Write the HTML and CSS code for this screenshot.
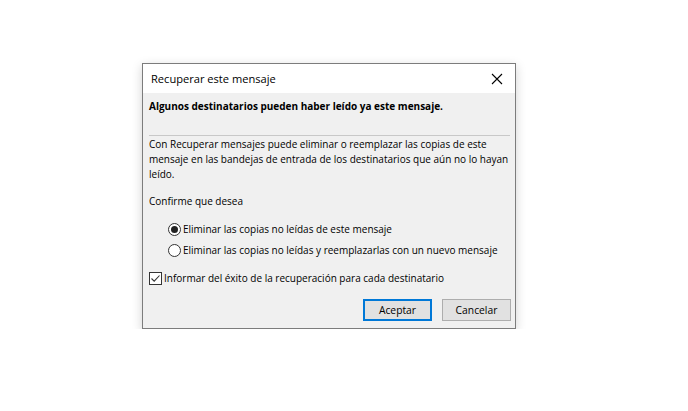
FILE: index.html
```html
<!DOCTYPE html>
<html lang="es">
<head>
    <meta charset="UTF-8">
    <meta name="viewport" content="width=device-width, initial-scale=1.0">
    <title>Recuperar este mensaje</title>
    <link rel="stylesheet" href="styles.css">
</head>
<body>
    <div class="dialog">
        <div class="titlebar">
            <span class="title">Recuperar este mensaje</span>
            <svg class="close" width="12" height="12" viewBox="0 0 12 12">
                <path d="M1 1 L11 11 M11 1 L1 11" stroke="#000" stroke-width="1.1" fill="none"/>
            </svg>
        </div>
        <div class="content">
            <p class="warning">Algunos destinatarios pueden haber leído ya este mensaje.</p>
            <hr class="sep">
            <p class="info">Con Recuperar mensajes puede eliminar o reemplazar las copias de este mensaje en las bandejas de entrada de los destinatarios que aún no lo hayan leído.</p>
            <p class="confirm">Confirme que desea</p>
            <div class="options">
                <label class="option"><span class="radio checked"></span>Eliminar las copias no leídas de este mensaje</label>
                <label class="option"><span class="radio"></span>Eliminar las copias no leídas y reemplazarlas con un nuevo mensaje</label>
            </div>
            <label class="check-row">
                <span class="checkbox">
                    <svg width="11" height="11" viewBox="0 0 11 11">
                        <path d="M1.5 5.5 L4.2 8.2 L9.5 2.5" stroke="#333" stroke-width="1.1" fill="none"/>
                    </svg>
                </span>Informar del éxito de la recuperación para cada destinatario
            </label>
            <div class="buttons">
                <button class="btn default">Aceptar</button>
                <button class="btn">Cancelar</button>
            </div>
        </div>
    </div>
</body>
</html>
```

FILE: styles.css
```css
body {
    margin: 0;
    background: #ffffff;
    font-family: "Open Sans", "Noto Sans", sans-serif;
    color: #000;
}
.dialog {
    margin: 63px 0 0 142px;
    width: 372px;
    height: 264px;
    border: 1px solid #7c7c7c;
    background: #f0f0f0;
    box-shadow: 0 3px 10px rgba(0, 0, 0, 0.18);
}
.titlebar {
    height: 29px;
    background: #ffffff;
    display: flex;
    align-items: center;
    justify-content: space-between;
    padding: 0 12px 0 8px;
}
.title {
    font-size: 11.1px;
}
.close {
    display: block;
}
.content {
    padding: 0 4px 0 6px;
    font-size: 10px;
}
.warning {
    margin: 0;
    padding-top: 6px;
    font-size: 10px;
    font-weight: bold;
    line-height: 15px;
}
.sep {
    margin: 21px 1px 0 0;
    border: none;
    border-top: 1px solid #c8c8c8;
}
.info {
    margin: 1px 0 0 0;
    line-height: 15px;
}
.confirm {
    margin: 12px 0 0 0;
    line-height: 15px;
}
.options {
    margin: 13px 0 0 19px;
    display: flex;
    flex-direction: column;
    gap: 6px;
}
.option, .check-row {
    display: flex;
    align-items: center;
    line-height: 15px;
}
.radio {
    width: 11px;
    height: 11px;
    border: 1px solid #333;
    border-radius: 50%;
    background: #fff;
    margin-right: 2px;
    position: relative;
}
.radio.checked::after {
    content: "";
    position: absolute;
    left: 2px;
    top: 2px;
    width: 7px;
    height: 7px;
    border-radius: 50%;
    background: #222;
}
.check-row {
    margin-top: 13px;
}
.checkbox {
    width: 11px;
    height: 11px;
    border: 1px solid #333;
    background: #fff;
    margin-right: 2px;
    display: flex;
}
.buttons {
    margin-top: 13px;
    display: flex;
    justify-content: flex-end;
    gap: 10px;
}
.btn {
    width: 69px;
    height: 22px;
    font-family: inherit;
    font-size: 10.3px;
    background: #e1e1e1;
    border: 1px solid #adadad;
    padding: 0;
}
.btn.default {
    border-color: #0078d7;
    box-shadow: inset 0 0 0 1px #0078d7;
}
```
